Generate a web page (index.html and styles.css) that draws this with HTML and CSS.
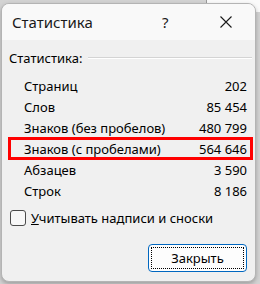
FILE: index.html
```html
<!DOCTYPE html>
<html lang="ru">
  <head>
    <meta charset="UTF-8" />
    <title>Статистика</title>
    <link rel="stylesheet" href="styles.css">
  </head>
  <body>
    <div class="window">
      <div class="titlebar">
        <span class="title">Статистика</span>
        <span class="help">?</span>
        <span class="close">
          <svg width="12" height="12" viewBox="0 0 12 12">
            <path d="M0.5 0.5 L11.5 11.5 M11.5 0.5 L0.5 11.5" stroke="#1a1a1a" stroke-width="1.1" fill="none" />
          </svg>
        </span>
      </div>

      <div class="content">
        <div class="group-label">
          <span>Статистика:</span>
          <div class="group-line"></div>
        </div>

        <div class="stats">
          <div class="row"><span>Страниц</span><span>202</span></div>
          <div class="row"><span>Слов</span><span>85 454</span></div>
          <div class="row"><span>Знаков (без пробелов)</span><span>480 799</span></div>
          <div class="row marked"><span>Знаков (с пробелами)</span><span>564 646</span></div>
          <div class="row"><span>Абзацев</span><span>3 590</span></div>
          <div class="row"><span>Строк</span><span>8 186</span></div>
        </div>

        <label class="check">
          <span class="box"></span>
          <span><u>У</u>читывать надписи и сноски</span>
        </label>

        <div class="actions">
          <button type="button"><span class="focus">Закрыть</span></button>
        </div>
      </div>
    </div>
  </body>
</html>
```

FILE: styles.css
```css
* {
  margin: 0;
  padding: 0;
  box-sizing: border-box;
}
body {
  font-family: "Noto Sans", "Open Sans", sans-serif;
  color: #000;
  background:
    linear-gradient(to right, #d3d3d3 206px, #9a9a9a 206px, #9a9a9a 207px, #fafafa 207px) top / 100% 12px no-repeat,
    #d3d3d3;
  width: 260px;
  height: 284px;
  padding: 3px 4px 2px 1px;
  overflow: hidden;
}
.window {
  height: 279px;
  border: 1px solid #b4b4b4;
  border-radius: 8px;
  background: #f0f0f0;
  overflow: hidden;
  box-shadow: 0 2px 4px rgba(0, 0, 0, 0.25);
  display: flex;
  flex-direction: column;
}

/* title bar */
.titlebar {
  flex-shrink: 0;
  height: 36px;
  background: #f9f9f9;
  display: flex;
  align-items: center;
  padding-left: 10px;
  font-size: 15px;
  color: #1a1a1a;
}
.title {
  flex: 1;
}
.help {
  width: 10px;
  margin-right: 48px;
}
.close {
  display: flex;
  margin-right: 23px;
}

/* body */
.content {
  flex: 1;
  padding: 9px 3px 0 7px;
  font-size: 13px;
}
.group-label {
  display: flex;
  align-items: center;
  height: 18px;
}
.group-line {
  flex: 1;
  height: 2px;
  margin-left: 6px;
  border-top: 1px solid #d4d4d4;
  border-bottom: 1px solid #fff;
}
.stats {
  margin-top: 8px;
}
.row {
  display: flex;
  justify-content: space-between;
  align-items: center;
  height: 21px;
  padding: 0 5px 0 15px;
}
.row.marked {
  outline: 3px solid #f00;
  outline-offset: -2px;
}

/* checkbox */
.check {
  display: flex;
  align-items: center;
  gap: 5px;
  margin-top: 8px;
  height: 18px;
  margin-left: 1px;
}
.box {
  width: 16px;
  height: 16px;
  border: 1px solid #4a4a4a;
  border-radius: 3px;
  background: #f7f7f7;
}

/* buttons */
.actions {
  display: flex;
  justify-content: flex-end;
  margin-top: 17px;
  padding-right: 5px;
}
button {
  width: 99px;
  height: 28px;
  padding: 2px;
  border: 1px solid #0067c0;
  border-radius: 4px;
  background: #fdfdfd;
  font-family: inherit;
  font-size: 13px;
  color: #000;
}
.focus {
  display: flex;
  align-items: center;
  justify-content: center;
  height: 100%;
  border: 1px dotted #000;
}
```
